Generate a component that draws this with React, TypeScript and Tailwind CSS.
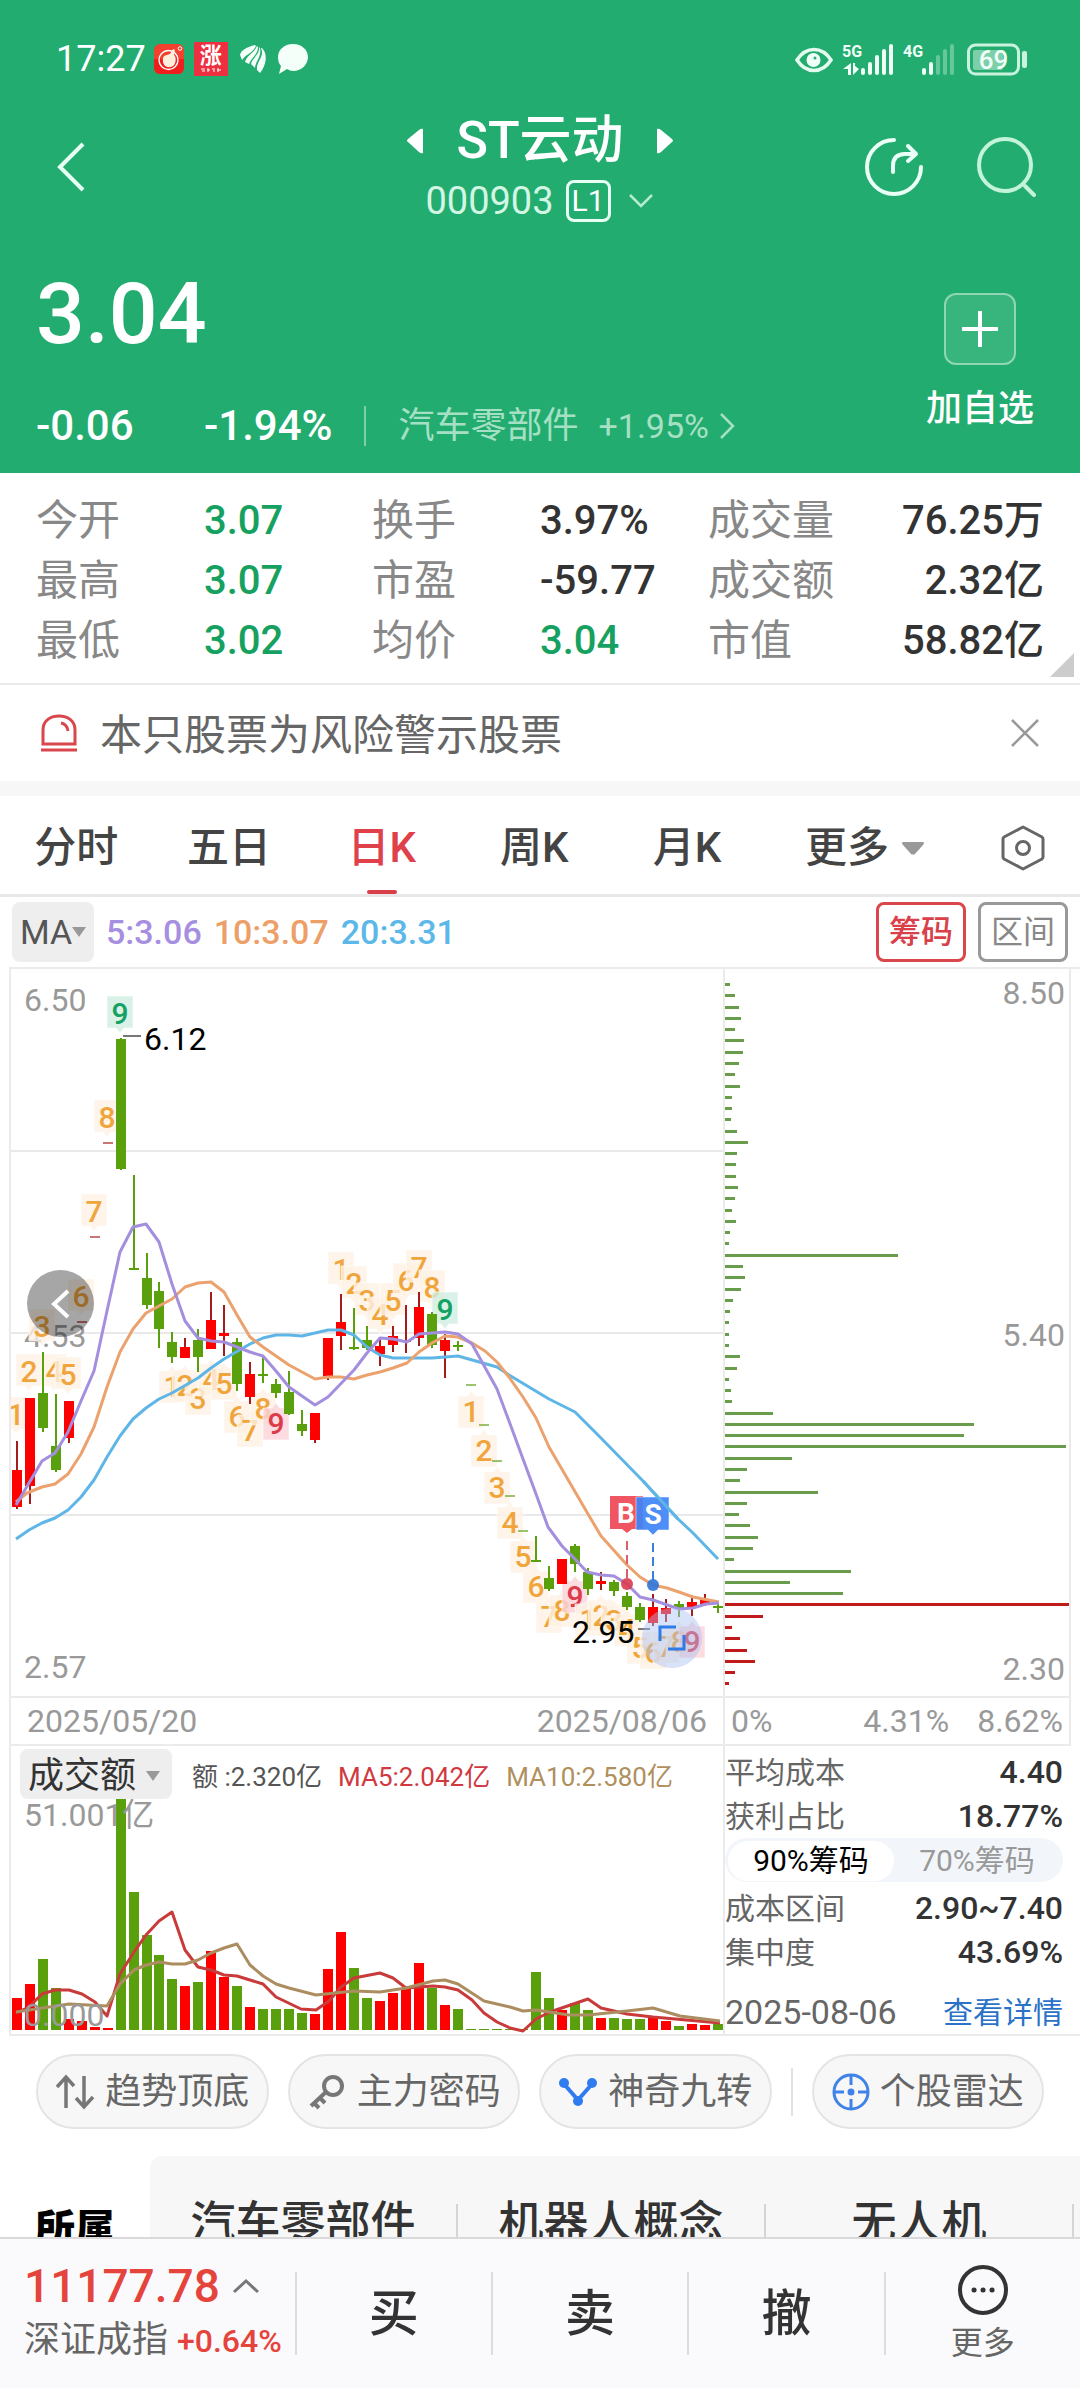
import type { ReactNode } from "react";

type Tone = "r" | "g";
type Candle = [Tone, number, number, number, number];
type Tag = [string, number, number, "up" | "down"];

const STATS = [
  ["今开", "3.07", true, "换手", "3.97%", false, "成交量", "76.25万"],
  ["最高", "3.07", true, "市盈", "-59.77", false, "成交额", "2.32亿"],
  ["最低", "3.02", true, "均价", "3.04", true, "市值", "58.82亿"],
] as const;

const TABS = ["分时", "五日", "日K", "周K", "月K"];

// tone, high, body top, body bottom, low
const CANDLES: Candle[] = [
  ["r", 1442, 1471, 1508, 1510],
  ["r", 1399, 1399, 1487, 1505],
  ["g", 1353, 1394, 1429, 1433],
  ["g", 1395, 1447, 1471, 1473],
  ["r", 1402, 1402, 1439, 1444],
  ["r", 1322, 1322, 1323, 1323],
  ["r", 1237, 1237, 1238, 1238],
  ["r", 1143, 1143, 1144, 1144],
  ["g", 1039, 1040, 1170, 1171],
  ["g", 1176, 1269, 1271, 1271],
  ["g", 1254, 1279, 1306, 1310],
  ["g", 1283, 1292, 1330, 1349],
  ["g", 1333, 1343, 1358, 1364],
  ["r", 1339, 1348, 1359, 1359],
  ["g", 1330, 1341, 1358, 1373],
  ["r", 1293, 1321, 1350, 1350],
  ["r", 1306, 1334, 1337, 1357],
  ["g", 1339, 1343, 1385, 1392],
  ["r", 1363, 1375, 1398, 1405],
  ["g", 1358, 1375, 1377, 1384],
  ["g", 1380, 1385, 1394, 1399],
  ["g", 1372, 1393, 1415, 1416],
  ["g", 1411, 1425, 1432, 1437],
  ["r", 1414, 1414, 1441, 1444],
  ["r", 1339, 1339, 1377, 1381],
  ["r", 1295, 1323, 1337, 1351],
  ["g", 1309, 1348, 1350, 1351],
  ["g", 1327, 1341, 1349, 1351],
  ["r", 1340, 1347, 1355, 1367],
  ["r", 1327, 1337, 1346, 1353],
  ["r", 1306, 1341, 1343, 1354],
  ["r", 1293, 1308, 1339, 1347],
  ["g", 1313, 1315, 1346, 1349],
  ["r", 1335, 1341, 1352, 1379],
  ["g", 1342, 1346, 1347, 1352],
  ["g", 1385, 1385, 1386, 1386],
  ["g", 1425, 1425, 1426, 1426],
  ["g", 1461, 1461, 1462, 1462],
  ["g", 1496, 1496, 1497, 1497],
  ["g", 1531, 1531, 1532, 1532],
  ["g", 1537, 1561, 1562, 1562],
  ["g", 1567, 1579, 1590, 1592],
  ["r", 1560, 1560, 1585, 1585],
  ["g", 1545, 1547, 1565, 1573],
  ["g", 1569, 1573, 1590, 1596],
  ["r", 1573, 1582, 1585, 1591],
  ["g", 1581, 1583, 1592, 1597],
  ["g", 1593, 1597, 1608, 1611],
  ["g", 1604, 1608, 1621, 1623],
  ["r", 1595, 1608, 1624, 1627],
  ["r", 1600, 1609, 1615, 1623],
  ["g", 1602, 1605, 1609, 1618],
  ["r", 1596, 1603, 1608, 1617],
  ["r", 1595, 1600, 1605, 1607],
  ["g", 1605, 1607, 1609, 1614],
];

const VOLUMES = [
  32, 46, 71, 42, 11, 9, 3, 2, 231, 138, 95, 75, 51, 44, 48, 79, 53, 44, 23, 21, 21, 21, 17, 16, 61, 98, 62, 32, 29,
  37, 41, 67, 42, 25, 21, 1, 1, 1, 1, 1, 58, 32, 20, 27, 20, 12, 12, 11, 11, 13, 9, 4, 6, 5, 6,
];

const TAGS: Tag[] = [
  ["1", 16, 1415, "down"], ["2", 29, 1372, "down"], ["3", 42, 1327, "down"], ["4", 54, 1372, "down"],
  ["5", 68, 1375, "down"], ["6", 81, 1297, "down"], ["7", 94, 1212, "down"], ["8", 107, 1118, "down"],
  ["9", 120, 1014, "down"],
  ["1", 172, 1387, "up"], ["2", 185, 1386, "up"], ["3", 198, 1399, "up"], ["4", 211, 1380, "up"],
  ["5", 224, 1384, "up"], ["6", 237, 1417, "up"], ["7", 250, 1431, "up"], ["8", 263, 1409, "up"],
  ["9", 276, 1424, "up"],
  ["1", 341, 1270, "down"], ["2", 354, 1284, "down"], ["3", 367, 1301, "down"], ["4", 380, 1315, "down"],
  ["5", 393, 1301, "down"], ["6", 406, 1281, "down"], ["7", 419, 1268, "down"], ["8", 432, 1288, "down"],
  ["9", 445, 1310, "down"],
  ["1", 471, 1412, "up"], ["2", 484, 1451, "up"], ["3", 497, 1488, "up"], ["4", 510, 1523, "up"],
  ["5", 523, 1557, "up"], ["6", 536, 1587, "up"], ["7", 549, 1617, "up"], ["8", 562, 1611, "up"],
  ["9", 575, 1597, "up"],
  ["1", 588, 1620, "up"], ["2", 601, 1616, "up"], ["3", 614, 1621, "up"], ["4", 627, 1630, "up"],
  ["5", 640, 1648, "up"], ["6", 653, 1653, "up"], ["7", 666, 1647, "up"], ["8", 679, 1642, "up"],
  ["9", 692, 1642, "up"],
];

const CHIPS_ABOVE = [
  3, 8, 12, 14, 8, 17, 16, 12, 8, 13, 5, 5, 4, 10, 21, 10, 9, 9, 11, 8, 5, 9, 3, 2, 171, 16, 18, 14, 6, 3, 2, 2, 2,
  13, 10, 2, 4, 5, 46, 247, 237, 339, 65, 20, 13, 91, 20, 12, 23, 31, 26, 7, 124, 63, 116,
];
const CHIPS_BELOW = [345, 36, 5, 13, 20, 28, 8, 2];

const MA5 =
  "16,1506 42,1462 55,1454 68,1433 81,1402 94,1372 107,1312 120,1253 133,1228 146,1225 159,1243 172,1285 185,1322 198,1339 211,1342 224,1343 237,1348 250,1353 263,1357 276,1372 289,1388 302,1397 315,1406 328,1398 354,1371 367,1354 380,1339 393,1340 407,1343 419,1335 445,1333 458,1335 472,1345 497,1390 509,1422 523,1460 536,1495 548,1528 562,1547 575,1560 587,1573 601,1576 614,1577 627,1585 640,1598 653,1601 679,1610 693,1609 706,1605 719,1604";
const MA10 =
  "16,1503 27,1494 42,1488 55,1485 68,1475 81,1455 94,1428 107,1388 120,1353 133,1330 146,1314 172,1300 185,1288 198,1284 211,1283 224,1293 237,1316 250,1338 263,1348 289,1366 315,1380 328,1378 341,1378 354,1380 367,1376 380,1373 393,1369 407,1364 419,1353 432,1344 445,1337 458,1338 472,1344 485,1352 497,1363 509,1378 523,1398 536,1419 549,1448 588,1515 601,1537 627,1566 640,1578 653,1586 667,1589 679,1593 693,1598 719,1603";
const MA20 =
  "16,1540 29,1531 42,1524 55,1519 68,1511 81,1498 94,1481 107,1458 120,1437 133,1420 146,1409 159,1400 172,1394 198,1379 211,1369 224,1360 250,1345 263,1339 276,1336 289,1336 302,1337 328,1331 341,1331 354,1336 367,1348 380,1356 393,1359 432,1359 458,1357 497,1368 509,1376 549,1400 575,1413 600,1438 643,1482 678,1520 693,1534 718,1560";
const VOL_MA5 =
  "16,2014 29,2008 42,1995 55,1991 69,1991 82,1995 95,2003 107,2017 120,1975 134,1953 146,1936 159,1922 172,1913 185,1951 198,1968 211,1971 224,1976 237,1977 250,1981 263,1985 276,1998 301,2010 316,2011 329,2002 341,1988 354,1979 380,1974 393,1979 406,1989 433,1987 445,1988 458,1991 472,2001 484,2014 497,2023 510,2029 523,2032 536,2020 550,2013 588,2000 601,2009 627,2015 653,2018 720,2024";
const VOL_MA10 =
  "16,2013 69,2005 107,2007 120,1985 134,1971 146,1966 159,1963 172,1965 185,1965 198,1961 211,1954 224,1949 237,1945 250,1966 263,1977 276,1985 289,1989 316,1996 354,1992 380,1993 406,1989 433,1982 445,1981 458,1985 484,2002 510,2008 523,2012 536,2011 569,2016 588,2016 627,2012 653,2009 680,2017 720,2022";

const UP = "#ff0000";
const DOWN = "#5aa00d";

const candleX = (i: number) => Math.round(16.7 + i * 12.98);

function StatusBar() {
  return (
    <div className="flex h-[110px] items-center justify-between pt-2 pr-13 pl-14">
      <div className="flex items-center">
        <span className="text-[36px] leading-10">17:27</span>
        <svg className="ml-2 size-[30px]" viewBox="0 0 30 30">
          <rect width="30" height="30" rx="6" fill="#f3402f" />
          <path d="M0 15h30v9a6 6 0 0 1-6 6H6a6 6 0 0 1-6-6z" fill="#f01d1d" />
          <circle cx="14.5" cy="16" r="9.5" fill="none" stroke="#fff" strokeWidth="1.4" />
          <path d="M9 14c1-3 4-3 7-4l3-5 2 1-1 5c3 3 2 11-3 12-6 1-9-3-8-9z" fill="#fdeedd" />
          <circle cx="26" cy="4.5" r="1.8" fill="none" stroke="#fff" />
        </svg>
        <div className="ml-2.5 flex h-[34px] w-[34px] flex-col items-center bg-[#ee2f3f] pt-0.5">
          <span className="text-[22px] leading-6 font-bold">涨</span>
          <svg className="h-1 w-5" viewBox="0 0 20 4">
            <path d="M0 1h4M1 3h3M6 2h3M7 0v4M11 1h3M12 3h2M16 2h4M17 0v4" stroke="#fff" strokeWidth="1" />
          </svg>
        </div>
        <svg className="ml-3 h-7 w-[26px]" viewBox="0 0 26 28" fill="#f4fff9">
          <path d="M15 0C7 2 1 5 0 10l2 5C6 9 13 8 16 1z" />
          <path d="M17 1C14 8 7 10 5 17l4 2c2-6 9-9 9-17z" />
          <path d="M19 2c1 8-7 11-8 17l4 4c0-6 7-12 5-20z" />
          <path d="M21 3c4 9-5 13-4 22l3 3c5-6 9-18 2-25z" />
        </svg>
        <svg className="ml-3 size-[30px]" viewBox="0 0 30 30" fill="#f4fff9">
          <path d="M15 0c9 0 15 6 15 13s-6 14-15 14c-2 0-4-1-6-2l-8 5 2-8C1 20 0 17 0 13 0 6 6 0 15 0z" />
        </svg>
      </div>
      <svg className="h-9 w-[234px]" viewBox="795 41 234 36" fill="#f0fff8">
        <path d="M798 60c9-14 25-14 34 0-9 14-25 14-34 0z" fill="none" stroke="#e6fbf0" strokeWidth="3.5" />
        <circle cx="814.5" cy="60" r="7" />
        <circle cx="816" cy="58" r="1.5" fill="#23ac6f" />
        <text x="843" y="57" className="text-[16px] font-bold">5G</text>
        <path d="M844 69h5v6h3V63zM854 63h2v3l4 3-6 6z" />
        <path d="M864 70v3M871 64v9M878 57v16M885 51v22M892 46v27" stroke="#f0fff8" strokeWidth="4" strokeLinecap="round" />
        <text x="904" y="57" className="text-[16px] font-bold">4G</text>
        <path d="M925 70v3M932 64v9" stroke="#f0fff8" strokeWidth="4" strokeLinecap="round" />
        <path d="M939 57v16M946 51v22M953 46v27" stroke="#66c79b" strokeWidth="4" strokeLinecap="round" />
        <rect x="969.5" y="45" width="50" height="29" rx="7" fill="none" stroke="#c9f2df" strokeWidth="3" />
        <rect x="974" y="50" width="30" height="20" rx="2" fill="#7ccfa8" />
        <rect x="1023" y="51" width="5" height="17" rx="2" fill="#c9f2df" />
        <text x="994.5" y="69" textAnchor="middle" className="text-[26px] font-medium">69</text>
      </svg>
    </div>
  );
}

function TitleBar() {
  return (
    <div className="grid h-[113px] grid-cols-[1fr_auto_1fr] items-center">
      <button className="ml-14 justify-self-start" aria-label="返回">
        <svg className="h-[52px] w-[30px]" viewBox="0 0 30 52">
          <path d="M27 3L4 26l23 23" fill="none" stroke="#e8fff4" strokeWidth="4" />
        </svg>
      </button>
      <div className="flex flex-col items-center gap-2">
        <div className="flex items-center gap-8">
          <button aria-label="上一只">
            <svg className="h-7 w-[18px]" viewBox="0 0 18 28">
              <path d="M17 2v24q-2 1-4-1L2 15q-2-1 0-3L13 3q2-2 4-1z" fill="#fff" />
            </svg>
          </button>
          <h1 className="text-[52px] leading-[60px] font-medium">ST云动</h1>
          <button aria-label="下一只">
            <svg className="h-7 w-[18px]" viewBox="0 0 18 28">
              <path d="M1 2v24q2 1 4-1l11-10q2-1 0-3L5 3Q3 1 1 2z" fill="#fff" />
            </svg>
          </button>
        </div>
        <button className="flex items-center text-[#d3f5e4]">
          <span className="text-[38px] leading-11">000903</span>
          <span className="ml-3 flex h-[42px] w-[45px] items-center justify-center rounded-lg border-[3px] border-[#e8fff4] text-[30px] leading-9 text-white">
            L1
          </span>
          <svg className="ml-4 h-4 w-7" viewBox="0 0 28 16">
            <path d="M3 2l11 11L25 2" fill="none" stroke="#b5ecd1" strokeWidth="2.5" />
          </svg>
        </button>
      </div>
      <div className="flex gap-[52px] justify-self-end pr-11">
        <button aria-label="分享">
          <svg className="size-[60px]" viewBox="0 0 60 60" fill="none" stroke="#eafff5" strokeWidth="4" strokeLinecap="round" strokeLinejoin="round">
            <path d="M30 3a27 27 0 1 0 27 27" />
            <path d="M29 35v-6q0-12 12-12h10M44 9l8 8-8 7" />
          </svg>
        </button>
        <button aria-label="搜索">
          <svg className="size-[60px]" viewBox="0 0 60 60" fill="none" stroke="#c4f3db" strokeWidth="4" strokeLinecap="round">
            <circle cx="29" cy="28" r="26" />
            <path d="M49 49l9 9" />
          </svg>
        </button>
      </div>
    </div>
  );
}

function Quote() {
  return (
    <div className="flex justify-between pt-[46px] pr-[46px] pb-[22px] pl-9">
      <div>
        <div className="text-[86px] leading-[90px] font-medium">3.04</div>
        <div className="mt-[42px] flex h-[50px] items-center text-[42px] leading-[50px] font-medium">
          <span className="w-[168px]">-0.06</span>
          <span>-1.94%</span>
          <span className="ml-8 h-10 w-0.5 bg-[#7fd0aa]" />
          <a href="#" className="ml-8 flex items-center text-[36px] font-normal text-[#a5e0c5]">
            汽车零部件
            <span className="ml-5 text-[34px]">+1.95%</span>
            <svg className="ml-2.5 h-7 w-4" viewBox="0 0 16 28">
              <path d="M2 2l12 12L2 26" fill="none" stroke="#a5e0c5" strokeWidth="2.5" />
            </svg>
          </a>
        </div>
      </div>
      <button className="mt-6 flex flex-col items-center self-start">
        <span className="flex size-[72px] items-center justify-center rounded-xl border-2 border-[#8fd6b4] bg-[#38b47d]">
          <svg className="size-9" viewBox="0 0 36 36">
            <path d="M18 1v34M1 18h34" stroke="#fff" strokeWidth="4" strokeLinecap="round" />
          </svg>
        </span>
        <span className="mt-5 text-[36px] leading-12 font-medium">加自选</span>
      </button>
    </div>
  );
}

function Stats() {
  return (
    <section className="relative border-b-2 border-[#ebebeb] px-9 pt-[18px] pb-3">
      <dl>
        {STATS.map(([a, av, ag, b, bv, bg, c, cv]) => (
          <div key={a} className="grid grid-cols-6 text-[40px] leading-[60px] font-medium whitespace-nowrap text-[#333]">
            <dt className="text-[42px] font-normal text-[#888]">{a}</dt>
            <dd className={ag ? "text-[#17a160]" : ""}>{av}</dd>
            <dt className="text-[42px] font-normal text-[#888]">{b}</dt>
            <dd className={bg ? "text-[#17a160]" : ""}>{bv}</dd>
            <dt className="text-[42px] font-normal text-[#888]">{c}</dt>
            <dd className="text-right">{cv}</dd>
          </div>
        ))}
      </dl>
      <svg className="absolute right-1.5 bottom-1.5 size-6" viewBox="0 0 24 24">
        <path d="M24 0v24H0z" fill="#ccc" />
      </svg>
    </section>
  );
}

function Notice() {
  return (
    <div className="flex h-[111px] items-center border-b-[15px] border-[#f7f7f7] pr-10 pl-10">
      <svg className="h-10 w-[38px]" viewBox="0 0 38 40" fill="none" stroke="#d9474d" strokeWidth="3">
        <path d="M3 31V17C3 8 10 3 19 3s16 5 16 14v14z" />
        <path d="M1 37h36M21 10q6 1 7 8" />
      </svg>
      <p className="ml-[22px] pt-1.5 text-[42px] leading-[60px] text-[#666]">本只股票为风险警示股票</p>
      <button className="ml-auto" aria-label="关闭">
        <svg className="size-[30px]" viewBox="0 0 30 30">
          <path d="M2 2l26 26M28 2L2 28" stroke="#999" strokeWidth="2.5" />
        </svg>
      </button>
    </div>
  );
}

function PeriodTabs() {
  return (
    <nav className="grid h-[101px] grid-cols-[repeat(5,1.35fr)_1.8fr_1fr] border-b-[3px] border-[#e8e8e8] pt-1.5 text-[42px] leading-[60px] text-[#444]">
      {TABS.map((t) => (
        <button key={t} className={t === "日K" ? "relative font-medium text-[#e0404a]" : "relative font-medium"}>
          {t}
          {t === "日K" && <span className="absolute inset-x-0 bottom-0 mx-auto h-1 w-[30px] rounded-sm bg-[#d9404a]" />}
        </button>
      ))}
      <button className="flex items-center justify-center gap-3 font-medium">
        更多
        <svg className="h-3.5 w-6" viewBox="0 0 24 14">
          <path d="M2 1h20q2 1 0 3l-8 9q-2 1-4 0L2 4Q0 2 2 1z" fill="#999" />
        </svg>
      </button>
      <button className="flex items-center justify-center" aria-label="设置">
        <svg className="h-[46px] w-11" viewBox="0 0 44 46" fill="none" stroke="#666" strokeWidth="3">
          <path d="M22 2l19 10q1 1 1 2v18q0 1-1 2L22 44 3 34q-1-1-1-2V14q0-1 1-2z" strokeLinejoin="round" />
          <circle cx="22" cy="23" r="6.5" />
        </svg>
      </button>
    </nav>
  );
}

function IndicatorRow() {
  return (
    <div className="flex h-[70px] items-center pr-3 pl-3 text-[34px] leading-10 font-medium">
      <label className="relative flex h-[60px] w-[82px] items-center rounded-lg bg-[#eee] font-normal text-[#555]">
        <select className="w-full appearance-none pl-2" aria-label="主图指标">
          <option>MA</option>
        </select>
        <svg className="pointer-events-none absolute right-2 h-2.5 w-3.5" viewBox="0 0 14 10">
          <path d="M0 0h14L7 10z" fill="#999" />
        </svg>
      </label>
      <span className="ml-3 text-[#a68ee0]">5:3.06</span>
      <span className="ml-3 text-[#eca068]">10:3.07</span>
      <span className="ml-3 text-[#5bb8e8]">20:3.31</span>
      <button className="ml-auto h-[60px] w-[90px] rounded-lg border-[3px] border-[#d9474d] text-[32px] text-[#d9404a]">筹码</button>
      <button className="ml-3 h-[60px] w-[90px] rounded-lg border-[3px] border-[#999] text-[32px] font-normal text-[#888]">区间</button>
    </div>
  );
}

function NineTag({ tag }: { tag: Tag }) {
  const [n, x, y, dir] = tag;
  const last = n === "9";
  const fill = last ? (dir === "down" ? "#cfeee0" : "#fbd3d8") : "#fef1e4";
  const ink = last ? (dir === "down" ? "#14a262" : "#dd3a4a") : "#f0a53c";
  const d =
    dir === "down"
      ? `M${x - 13} ${y - 17}h26v32h-9l-4 5-4-5h-9z`
      : `M${x - 13} ${y + 17}h26v-32h-9l-4-5-4 5h-9z`;
  return (
    <g>
      <path d={d} fill={fill} fillOpacity="0.8" stroke="#fff" strokeOpacity="0.6" />
      <text x={x} y={y + 11} textAnchor="middle" fill={ink} className="text-[30px] font-medium">
        {n}
      </text>
    </g>
  );
}

function KLine() {
  return (
    <div className="relative">
      <svg className="block h-auto w-full" viewBox="11 970 712 727">
        <path d="M11 1152h714M11 1334h714M11 1516h714" stroke="#e9e9e9" strokeWidth="2" />
        <g fill="#999" className="text-[32px]">
          <text x="24" y="1012">6.50</text>
          <text x="24" y="1348">4.53</text>
          <text x="24" y="1679">2.57</text>
        </g>
        {TAGS.map((t, i) => (
          <NineTag key={i} tag={t} />
        ))}
        {CANDLES.map(([tone, high, top, bottom, low], i) => {
          const flat = high === top && low === bottom && bottom - top < 2;
          const color = tone === "r" ? UP : DOWN;
          const wick = tone === "r" ? "#a51c1c" : DOWN;
          return (
            <g key={i} opacity={flat ? 0.6 : 1}>
              <path d={`M${candleX(i)} ${high}V${low}`} stroke={wick} strokeWidth="2" />
              <rect x={candleX(i) - 5} y={top} width="10" height={Math.max(bottom - top, 2)} fill={flat ? wick : color} />
            </g>
          );
        })}
        <g fill="none" strokeWidth="3" strokeLinejoin="round">
          <polyline points={MA20} stroke="#5fb6e6" />
          <polyline points={MA10} stroke="#eba26e" />
          <polyline points={MA5} stroke="#a48fdf" />
        </g>
        <path d="M123 1037h18M638 1630h12" stroke="#777" strokeWidth="2" />
        <g fill="#000" className="text-[32px]">
          <text x="144" y="1051">6.12</text>
          <text x="572" y="1644">2.95</text>
        </g>
        <path d="M627 1542v38" stroke="#d9606a" strokeWidth="2" strokeDasharray="9 5" />
        <path d="M653 1544v38" stroke="#3a7fd8" strokeWidth="2" strokeDasharray="9 5" />
        <circle cx="627" cy="1585" r="6" fill="#dc3a50" fillOpacity="0.9" />
        <circle cx="653" cy="1586" r="6" fill="#2f74d6" fillOpacity="0.9" />
        <path d="M610 1497h33v33h-11l-5 4-5-4h-12z" fill="#f05562" />
        <path d="M636 1498h33v33h-11l-5 5-5-5h-12z" fill="#3f84f6" fillOpacity="0.92" stroke="#fff" strokeOpacity="0.5" />
        <g fill="#fff" textAnchor="middle" className="text-[28px] font-bold">
          <text x="626" y="1524">B</text>
          <text x="653" y="1525">S</text>
        </g>
        <polyline points="643,1482 678,1520" stroke="#5fb6e6" strokeWidth="3" />
      </svg>
      <button className="absolute top-[301px] left-4 flex size-[67px] items-center justify-center rounded-full bg-black/35" aria-label="收起">
        <svg className="h-8 w-5" viewBox="0 0 20 32">
          <path d="M17 3L3 16l14 13" fill="none" stroke="#fff" strokeWidth="4" />
        </svg>
      </button>
      <button className="absolute top-[639px] left-[631px] flex size-[60px] items-center justify-center rounded-full bg-[#a9bff0]/45" aria-label="全屏">
        <svg className="size-7" viewBox="0 0 28 28">
          <path d="M2 17V3h16M26 11v14H10" fill="none" stroke="#2f7bea" strokeWidth="3" />
        </svg>
      </button>
    </div>
  );
}

function ChipChart() {
  return (
    <svg className="block h-auto w-full border-r-2 border-[#ebebeb]" viewBox="725 970 344 727">
      {CHIPS_ABOVE.map((len, i) => (
        <rect key={i} x="725" y={Math.round(984 + i * 11.28)} width={len + 2} height="3" fill="#6a9d4b" />
      ))}
      {CHIPS_BELOW.map((len, i) => (
        <rect key={i} x="725" y={Math.round(984 + (i + 55) * 11.28)} width={len + 2} height="3" fill="#c01a1a" />
      ))}
      <g fill="#999" textAnchor="end" className="text-[32px]">
        <text x="1065" y="1005">8.50</text>
        <text x="1065" y="1347">5.40</text>
        <text x="1065" y="1681">2.30</text>
      </g>
    </svg>
  );
}

function Turnover() {
  return (
    <div>
      <div className="flex h-[53px] items-end pl-[9px] text-[26px] leading-11 whitespace-nowrap">
        <label className="relative flex h-[50px] w-[152px] items-center rounded-lg bg-[#eee] pt-1 text-[36px] text-[#333]">
          <select className="w-full appearance-none pl-2" aria-label="副图指标">
            <option>成交额</option>
          </select>
          <svg className="pointer-events-none absolute right-3 h-2.5 w-3.5" viewBox="0 0 14 10">
            <path d="M0 0h14L7 10z" fill="#999" />
          </svg>
        </label>
        <span className="ml-5 text-[#555]">额 :2.320亿</span>
        <span className="ml-4 text-[#d0393f]">MA5:2.042亿</span>
        <span className="ml-4 text-[#b0905c]">MA10:2.580亿</span>
      </div>
      <svg className="block h-auto w-full" viewBox="11 1800 712 234">
        {VOLUMES.map((h, i) => (
          <rect key={i} x={candleX(i) - 5} y={2031 - h} width="10" height={h} fill={CANDLES[i][0] === "r" ? UP : DOWN} />
        ))}
        <g fill="none" strokeWidth="3" strokeLinejoin="round">
          <polyline points={VOL_MA5} stroke="#c93a3a" />
          <polyline points={VOL_MA10} stroke="#ab8d60" />
        </g>
        <g fill="#999" className="text-[32px]">
          <text x="24" y="1827">51.001亿</text>
          <text x="24" y="2027">0.000</text>
        </g>
      </svg>
    </div>
  );
}

function InfoRow({ label, value }: { label: string; value: string }) {
  return (
    <div className="flex h-11 items-center justify-between">
      <dt className="text-[30px] text-[#666]">{label}</dt>
      <dd className="text-[32px] font-medium text-[#333]">{value}</dd>
    </div>
  );
}

function ChipInfo() {
  return (
    <div className="pt-1 pr-2">
      <dl>
        <InfoRow label="平均成本" value="4.40" />
        <InfoRow label="获利占比" value="18.77%" />
      </dl>
      <div className="grid h-11 grid-cols-2 rounded-full bg-[#f2f6fa] p-[3px] text-[30px] leading-10">
        <button className="rounded-full bg-white text-black" aria-pressed="true">90%筹码</button>
        <button className="text-[#999]" aria-pressed="false">70%筹码</button>
      </div>
      <dl className="pt-1">
        <InfoRow label="成本区间" value="2.90~7.40" />
        <InfoRow label="集中度" value="43.69%" />
      </dl>
      <div className="mt-4 flex h-11 items-center justify-between text-[34px] text-[#666]">
        2025-08-06
        <a href="#" className="text-[30px] text-[#2b72c8]">查看详情</a>
      </div>
    </div>
  );
}

function Chart() {
  return (
    <section className="ml-[9px] border-y-2 border-[#ebebeb] pr-[9px]">
      <div className="grid grid-cols-[716fr_346fr]">
        <div className="border-x-2 border-[#ebebeb]">
          <KLine />
          <div className="flex h-12 items-center justify-between border-t-2 border-[#ebebeb] pr-4 pl-4 text-[32px] text-[#999]">
            <span>2025/05/20</span>
            <span>2025/08/06</span>
          </div>
          <div className="border-t-2 border-[#ebebeb]">
            <Turnover />
          </div>
        </div>
        <div>
          <ChipChart />
          <div className="flex h-12 items-center border-t-2 border-r-2 border-[#ebebeb] pr-1.5 pl-1.5 text-[32px] text-[#999]">
            <span>0%</span>
            <span className="ml-auto">4.31%</span>
            <span className="ml-7">8.62%</span>
          </div>
          <div className="border-t-2 border-[#ebebeb]">
            <ChipInfo />
          </div>
        </div>
      </div>
    </section>
  );
}

function Pill({ icon, children }: { icon: ReactNode; children: string }) {
  return (
    <button className="flex h-[75px] flex-1 items-center justify-center gap-2.5 rounded-full border-2 border-[#e4e4e4] bg-[#f7f7f7] text-[36px] leading-12 whitespace-nowrap text-[#666]">
      {icon}
      {children}
    </button>
  );
}

function Tools() {
  return (
    <div className="flex items-center gap-[19px] px-9 pt-[18px] pb-[27px]">
      <Pill
        icon={
          <svg className="h-9 w-10" viewBox="0 0 40 36" fill="none" stroke="#777" strokeWidth="3.5">
            <path d="M11 34V3M2 13l9-10 8 9M29 2v31M21 24l8 9 9-10" />
          </svg>
        }
      >
        趋势顶底
      </Pill>
      <Pill
        icon={
          <svg className="h-9 w-10" viewBox="0 0 40 36" fill="none" stroke="#777" strokeWidth="4">
            <circle cx="26" cy="12" r="9" />
            <path d="M19 18L4 32M7 29l5 5M13 24l5 5" />
          </svg>
        }
      >
        主力密码
      </Pill>
      <Pill
        icon={
          <svg className="h-8 w-10" viewBox="0 0 40 32" fill="#2f7bf0">
            <path d="M6 8l14 16L34 8" fill="none" stroke="#2f7bf0" strokeWidth="4" />
            <circle cx="6" cy="7" r="5" />
            <circle cx="34" cy="7" r="5" />
            <circle cx="20" cy="25" r="5" />
          </svg>
        }
      >
        神奇九转
      </Pill>
      <span className="h-12 w-0.5 bg-[#e2e2e2]" />
      <Pill
        icon={
          <svg className="size-[38px]" viewBox="0 0 38 38" fill="none" stroke="#3f82e8" strokeWidth="3">
            <circle cx="19" cy="19" r="17" />
            <path d="M19 2v10M19 26v10M2 19h10M26 19h10" />
            <circle cx="19" cy="19" r="2" fill="#3f82e8" />
          </svg>
        }
      >
        个股雷达
      </Pill>
    </div>
  );
}

function Sectors() {
  return (
    <div className="flex h-[81px] overflow-hidden">
      <div className="w-[150px] shrink-0 pt-11 text-center text-[40px] leading-[60px] font-black text-black">所属</div>
      <div className="grid h-[140px] flex-1 grid-cols-3 rounded-tl-xl bg-[#f7f7f8] pt-[38px] pr-1.5 text-[45px] leading-[60px] font-medium text-[#333]">
        {["汽车零部件", "机器人概念", "无人机"].map((s) => (
          <a href="#" key={s} className="flex items-center justify-center self-start whitespace-nowrap">
            <span className="flex-1 text-center">{s}</span>
            <span className="h-10 w-0.5 bg-[#d5d5d5]" />
          </a>
        ))}
      </div>
    </div>
  );
}

function BottomBar() {
  return (
    <footer className="grid h-[151px] grid-cols-[3fr_2fr_2fr_2fr_2fr] items-center border-t-2 border-[#d9d9db] bg-[#fafafc]">
      <div className="pl-6 whitespace-nowrap">
        <div className="flex items-center text-[46px] leading-[54px] font-medium text-[#e5443d]">
          11177.78
          <svg className="ml-3 h-4 w-7" viewBox="0 0 28 16">
            <path d="M2 14L14 3l12 11" fill="none" stroke="#777" strokeWidth="3" />
          </svg>
        </div>
        <div className="text-[36px] leading-[54px] text-[#666]">
          深证成指 <span className="text-[32px] font-medium text-[#e5443d]">+0.64%</span>
        </div>
      </div>
      {["买", "卖", "撤"].map((s) => (
        <button key={s} className="h-[83px] border-l-2 border-[#dcdcde] text-[50px] leading-[60px] font-medium text-[#333]">
          {s}
        </button>
      ))}
      <button className="flex h-[83px] flex-col items-center justify-center gap-2 border-l-2 border-[#dcdcde] text-[32px] leading-10 text-[#666]">
        <svg className="size-[50px] shrink-0" viewBox="0 0 50 50">
          <circle cx="25" cy="25" r="23" fill="none" stroke="#333" strokeWidth="4" />
          <path d="M16 25h.1M25 25h.1M34 25h.1" stroke="#333" strokeWidth="5" strokeLinecap="round" />
        </svg>
        更多
      </button>
    </footer>
  );
}

export default function App() {
  return (
    <div className="w-full bg-white font-['Roboto','Noto_Sans_CJK_SC',sans-serif]">
      <header className="bg-[#23ac6f] text-white">
        <StatusBar />
        <TitleBar />
        <Quote />
      </header>
      <main>
        <Stats />
        <Notice />
        <PeriodTabs />
        <IndicatorRow />
        <Chart />
        <Tools />
        <Sectors />
      </main>
      <BottomBar />
    </div>
  );
}
